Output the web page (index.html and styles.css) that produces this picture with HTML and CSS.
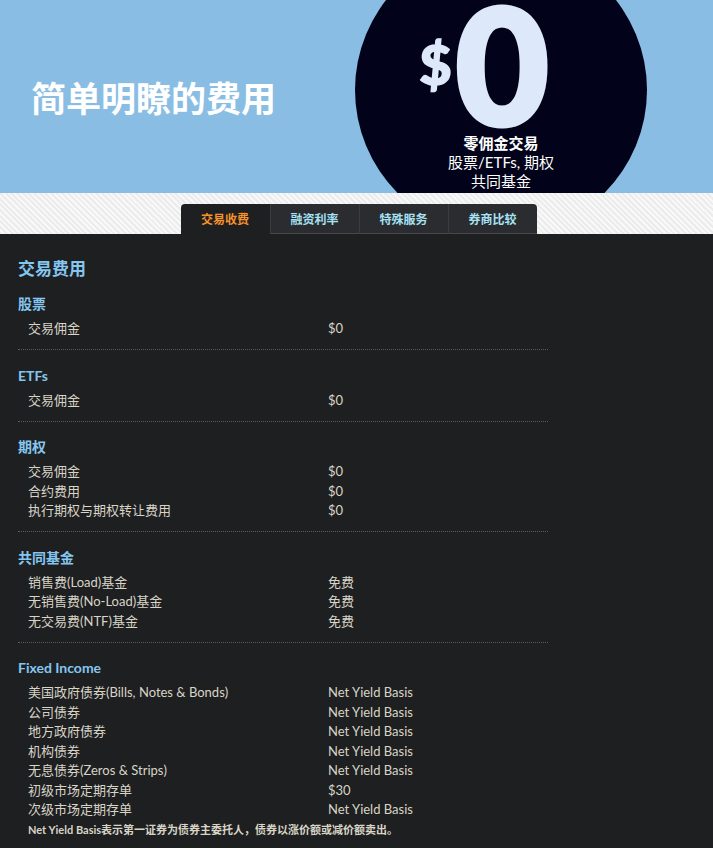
FILE: index.html
```html
<!DOCTYPE html>
<html lang="zh-CN">
<head>
<meta charset="utf-8">
<title>简单明瞭的费用</title>
<link rel="stylesheet" href="styles.css">
</head>
<body>
<header class="hero">
  <h1 class="hero-title">简单明瞭的费用</h1>
  <div class="badge">
    <div class="price"><span class="dollar">$</span><span class="zero">0</span></div>
    <div class="badge-line strong">零佣金交易</div>
    <div class="badge-line">股票/ETFs, 期权</div>
    <div class="badge-line">共同基金</div>
  </div>
</header>

<nav class="tabbar">
  <ul class="tabs">
    <li class="tab active">交易收费</li>
    <li class="tab">融资利率</li>
    <li class="tab">特殊服务</li>
    <li class="tab">券商比较</li>
  </ul>
</nav>

<main class="content">
  <h2 class="page-heading">交易费用</h2>

  <section class="group">
    <h3 class="group-title">股票</h3>
    <div class="row"><span>交易佣金</span><span>$0</span></div>
  </section>

  <section class="group">
    <h3 class="group-title">ETFs</h3>
    <div class="row"><span>交易佣金</span><span>$0</span></div>
  </section>

  <section class="group">
    <h3 class="group-title">期权</h3>
    <div class="row"><span>交易佣金</span><span>$0</span></div>
    <div class="row"><span>合约费用</span><span>$0</span></div>
    <div class="row"><span>执行期权与期权转让费用</span><span>$0</span></div>
  </section>

  <section class="group">
    <h3 class="group-title">共同基金</h3>
    <div class="row"><span>销售费(Load)基金</span><span>免费</span></div>
    <div class="row"><span>无销售费(No-Load)基金</span><span>免费</span></div>
    <div class="row"><span>无交易费(NTF)基金</span><span>免费</span></div>
  </section>

  <section class="group last">
    <h3 class="group-title">Fixed Income</h3>
    <div class="row"><span>美国政府债券(Bills, Notes &amp; Bonds)</span><span>Net Yield Basis</span></div>
    <div class="row"><span>公司债券</span><span>Net Yield Basis</span></div>
    <div class="row"><span>地方政府债券</span><span>Net Yield Basis</span></div>
    <div class="row"><span>机构债券</span><span>Net Yield Basis</span></div>
    <div class="row"><span>无息债券(Zeros &amp; Strips)</span><span>Net Yield Basis</span></div>
    <div class="row"><span>初级市场定期存单</span><span>$30</span></div>
    <div class="row"><span>次级市场定期存单</span><span>Net Yield Basis</span></div>
    <p class="note">Net Yield Basis表示第一证券为债券主委托人，债券以涨价额或减价额卖出。</p>
  </section>
</main>
</body>
</html>
```

FILE: styles.css
```css
* { box-sizing: border-box; }

html, body {
  margin: 0;
  padding: 0;
  background: #1e1f21;
  font-family: "Lato", "Noto Sans CJK SC", sans-serif;
}

.hero {
  position: relative;
  height: 193px;
  background: #89bde3;
  overflow: hidden;
  display: flex;
  align-items: center;
  padding-left: 31px;
}

.hero-title {
  margin: 0;
  font-size: 35px;
  font-weight: 700;
  color: #ffffff;
  line-height: 1;
  padding-top: 3px;
}

.badge {
  position: absolute;
  left: 355px;
  top: -56px;
  width: 292px;
  height: 292px;
  border-radius: 50%;
  background: #02031a;
  display: flex;
  flex-direction: column;
  align-items: center;
  padding-top: 60px;
  color: #ffffff;
}

.price {
  display: flex;
  align-items: flex-start;
  height: 118px;
  margin-right: 34px;
  color: #dde9fa;
  font-weight: 900;
}

.dollar {
  font-size: 56px;
  line-height: 56px;
  margin-top: 32px;
  margin-right: 4px;
  -webkit-text-stroke: 1.5px #dde9fa;
}

.zero {
  font-size: 160px;
  line-height: 118px;
  -webkit-text-stroke: 5px #dde9fa;
}

.badge-line {
  font-size: 15px;
  line-height: 19px;
  text-align: center;
}

.badge-line.strong {
  font-weight: 700;
  margin-top: 12px;
}

.tabbar {
  height: 41px;
  background: repeating-linear-gradient(45deg, #ececec 0 2px, #f8f8f8 2px 4px);
  display: flex;
  justify-content: center;
  align-items: flex-end;
  padding-left: 4px;
}

.tabs {
  list-style: none;
  margin: 0;
  padding: 0;
  display: flex;
  height: 30px;
}

.tab {
  width: 89px;
  height: 30px;
  display: flex;
  align-items: center;
  justify-content: center;
  font-size: 12px;
  font-weight: 700;
  color: #a6e2f4;
  background: #2a2c2f;
  border-left: 1px solid #3a3c40;
  border-bottom: 1px solid #48494c;
}

.tab:first-child {
  border-left: none;
  border-top-left-radius: 4px;
}

.tab:last-child {
  border-top-right-radius: 4px;
}

.tab.active {
  color: #f6932a;
  background: #1e1f21;
  border-bottom-color: #1e1f21;
}

.content {
  width: 548px;
  padding: 23px 0 8px 18px;
}

.page-heading {
  margin: 0 0 13px;
  font-size: 17px;
  line-height: 24px;
  font-weight: 700;
  color: #85c6f0;
}

.group {
  padding: 0 0 10.5px;
  border-bottom: 1px dotted #5c5c5c;
  margin-bottom: 15.5px;
}

.group.last {
  border-bottom: none;
  margin-bottom: 0;
}

.group-title {
  margin: 0 0 5px;
  font-size: 14px;
  line-height: 20px;
  font-weight: 700;
  color: #85c6f0;
}

.row {
  display: grid;
  grid-template-columns: 300px 1fr;
  padding-left: 10px;
  font-size: 13px;
  line-height: 19.5px;
  color: #d8d4c6;
}

.note {
  margin: 2px 0 0;
  padding-left: 10px;
  font-size: 11px;
  line-height: 16px;
  font-weight: 700;
  color: #d8d4c6;
}
```
